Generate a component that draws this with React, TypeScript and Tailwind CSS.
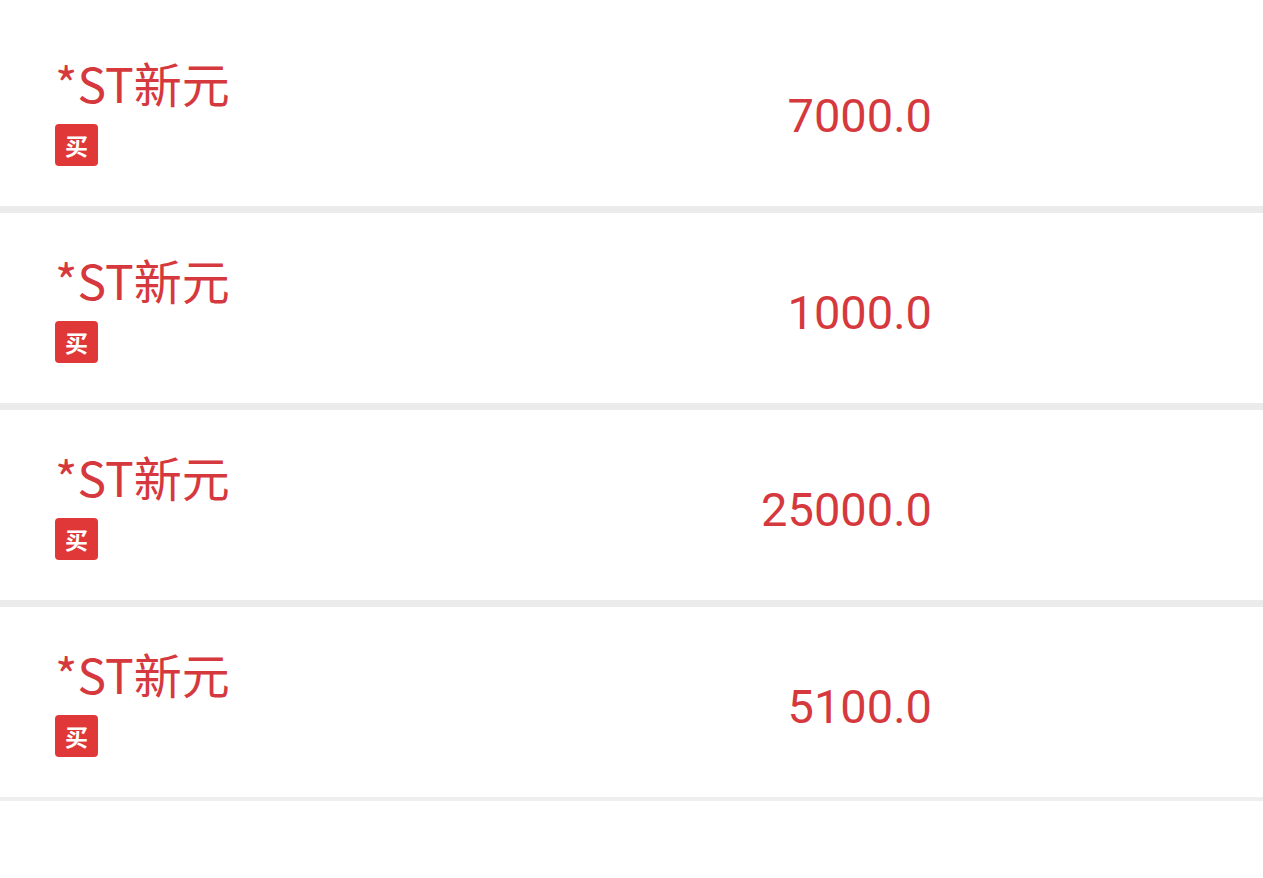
import React from "react";

const rows = ["7000.0", "1000.0", "25000.0", "5100.0"];

const App: React.FC = () => {
  return (
    <div className="min-h-screen bg-white pt-[16px] font-['Noto_Sans_CJK_SC',sans-serif]">
      {rows.map((amount, i) => (
        <div key={i}>
          <div className="flex h-[190px] w-[932px] justify-between pl-[55px]">
            <div className="flex flex-col pt-[38px]">
              <div className="text-[48px] leading-[56px] text-[#d6393d]">*ST新元</div>
              <div className="mt-[14px] flex h-[42px] w-[43px] items-center justify-center rounded-[4px] bg-[#e03838] text-[23px] font-bold text-white">
                买
              </div>
            </div>
            <div className="pt-[72px] font-['Roboto',sans-serif] text-[47px] leading-[56px] text-[#d6393d]">
              {amount}
            </div>
          </div>
          <div className={i === rows.length - 1 ? "h-[4px] bg-[#eeeeee]" : "h-[7px] bg-[#ebebeb]"} />
        </div>
      ))}
    </div>
  );
};

export default App;
